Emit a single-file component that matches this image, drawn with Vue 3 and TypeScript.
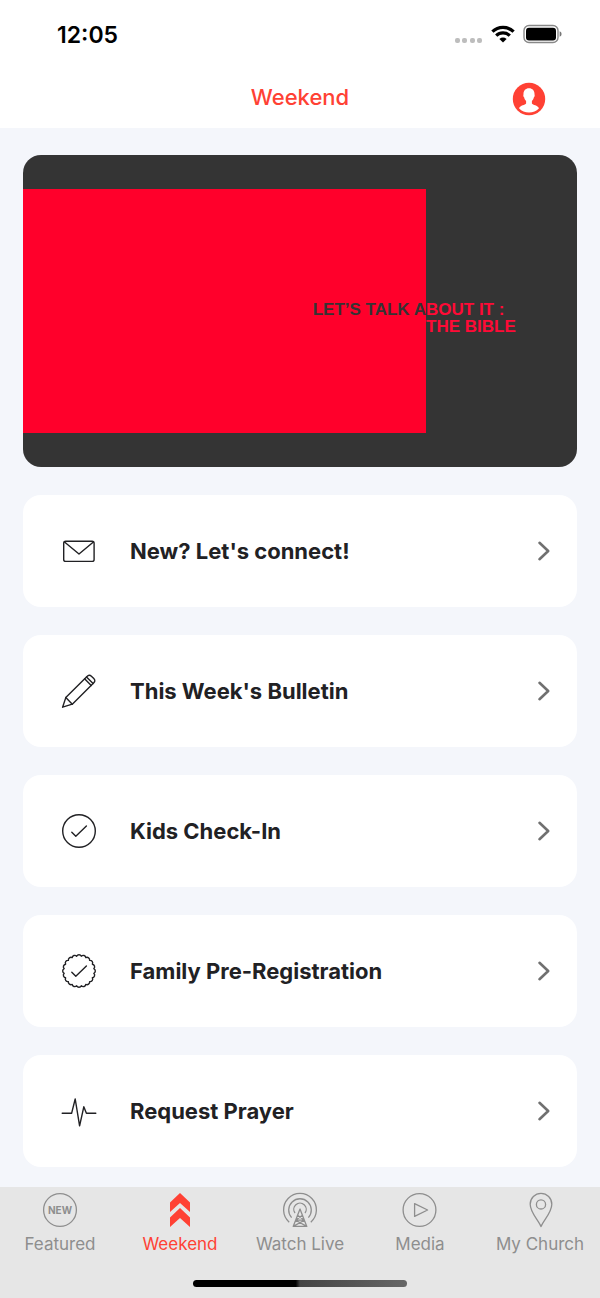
<script setup lang="ts">
type IconName = 'mail' | 'pencil' | 'check' | 'badge' | 'pulse'
type TabName = 'featured' | 'weekend' | 'live' | 'media' | 'church'

interface LinkItem {
  icon: IconName
  label: string
}

interface TabItem {
  icon: TabName
  label: string
}

const links: LinkItem[] = [
  { icon: 'mail', label: 'New? Let\'s connect!' },
  { icon: 'pencil', label: 'This Week\'s Bulletin' },
  { icon: 'check', label: 'Kids Check-In' },
  { icon: 'badge', label: 'Family Pre-Registration' },
  { icon: 'pulse', label: 'Request Prayer' },
]

const tabs: TabItem[] = [
  { icon: 'featured', label: 'Featured' },
  { icon: 'weekend', label: 'Weekend' },
  { icon: 'live', label: 'Watch Live' },
  { icon: 'media', label: 'Media' },
  { icon: 'church', label: 'My Church' },
]

const activeTab: TabName = 'weekend'

// Outline of a round seal whose edge is made of small outward arcs.
function sealPath(center: number, radius: number, lobes: number): string {
  const point = (i: number): string => {
    const angle = ((i + 0.5) / lobes) * Math.PI * 2 - Math.PI / 2
    const x = center + radius * Math.cos(angle)
    const y = center + radius * Math.sin(angle)
    return `${x.toFixed(2)} ${y.toFixed(2)}`
  }
  let d = `M${point(0)}`
  for (let i = 1; i <= lobes; i++) d += `A2.6 2.6 0 0 1 ${point(i)}`
  return `${d}Z`
}

const seal = sealPath(18, 15, 20)
</script>

<template>
  <div class="app">
    <header class="header">
      <div class="status">
        <span class="clock">12:05</span>
        <div class="signals">
          <svg class="dots" width="28" height="20" viewBox="0 0 28 20" aria-hidden="true">
            <rect x="0" y="14" width="5" height="5" rx="2" />
            <rect x="7" y="14" width="5" height="5" rx="2" />
            <rect x="15" y="14" width="5" height="5" rx="2" />
            <rect x="22" y="14" width="5" height="5" rx="2" />
          </svg>
          <svg width="24" height="20" viewBox="0 0 24 20" aria-hidden="true">
            <g fill="none" stroke="#000" stroke-width="3.2">
              <path d="M1.4 7.7A15.2 15.2 0 0 1 22.6 7.7" />
              <path d="M5.2 11.7A9.8 9.8 0 0 1 18.8 11.7" />
            </g>
            <path d="M12 18.6L8.4 14.9Q12 12 15.6 14.9Z" />
          </svg>
          <svg class="battery" width="39" height="20" viewBox="0 0 39 20" aria-hidden="true">
            <rect x="1" y="1.5" width="34" height="17" rx="5" fill="none" stroke="#888" stroke-width="1.4" />
            <rect x="3" y="3.7" width="30" height="12.8" rx="3" />
            <path d="M36.6 7.2Q38.6 8 38.6 10T36.6 12.8Z" fill="#777" />
          </svg>
        </div>
      </div>
      <div class="titlebar">
        <h1 class="title">Weekend</h1>
        <button class="profile" type="button" aria-label="Profile">
          <svg width="34" height="34" viewBox="0 0 34 34" aria-hidden="true">
            <circle cx="17" cy="17" r="16.2" fill="#ff4134" />
            <path
              fill="#fff"
              d="M17 6.2C13.4 6.2 11.3 8.8 11.5 12.4C11.1 12.8 11.3 14.6 12.1 15.2C12.5 17 13.2 18.2 14.1 19V21.6C13.3 23.2 8.2 23.3 7 26.2A13.8 13.8 0 0 0 27 26.2C25.8 23.3 20.7 23.2 19.9 21.6V19C20.8 18.2 21.5 17 21.9 15.2C22.7 14.6 22.9 12.8 22.5 12.4C22.7 8.8 20.6 6.2 17 6.2Z"
            />
          </svg>
        </button>
      </div>
    </header>

    <main class="content">
      <section class="banner" aria-label="Current series">
        <div class="banner-art">
          <p class="art-left">LET’S TALK A</p>
          <p class="art-right">BOUT IT :<br />THE BIBLE</p>
        </div>
      </section>

      <a v-for="link in links" :key="link.icon" class="card" href="#">
        <svg class="card-icon" width="36" height="36" viewBox="0 0 36 36" aria-hidden="true">
          <g v-if="link.icon === 'mail'">
            <rect x="2.7" y="8.2" width="30.4" height="20.2" rx="2" />
            <path d="M3.5 9L18 21L32.4 9" />
          </g>
          <g v-else-if="link.icon === 'pencil'">
            <path d="M1.6 34.2L4.8 24.6L26 3.4C27.4 2 28.8 1.6 30.4 3.2L32.8 5.6C34.4 7.2 34 8.6 32.6 10L11.3 31.2Z" />
            <path d="M4.8 24.6L11.3 31.2M23.6 5.8L30.2 12.4M25.5 3.9L32.1 10.5" />
          </g>
          <g v-else-if="link.icon === 'check'">
            <circle cx="18" cy="18" r="16.3" />
            <path d="M10.8 19.2L14.8 23.2L25.4 13" />
          </g>
          <g v-else-if="link.icon === 'badge'">
            <path :d="seal" />
            <path d="M10.8 19.2L14.8 23.2L25.4 13" />
          </g>
          <g v-else>
            <path d="M1.2 20.3H10.6L14.2 6L18.6 32.8L22.8 13.8L25.4 20.3H34.8" />
          </g>
        </svg>
        <span class="card-label">{{ link.label }}</span>
        <svg class="chevron" width="14" height="22" viewBox="0 0 14 22" aria-hidden="true">
          <path d="M2.5 2.8L11.2 11L2.5 19.2" />
        </svg>
      </a>
    </main>

    <footer class="footer">
      <nav class="tabs" aria-label="Sections">
        <a
          v-for="tab in tabs"
          :key="tab.icon"
          class="tab"
          :class="{ active: tab.icon === activeTab }"
          :aria-current="tab.icon === activeTab ? 'page' : undefined"
          href="#"
        >
          <svg class="tab-icon" width="36" height="36" viewBox="0 0 36 36" aria-hidden="true">
            <g v-if="tab.icon === 'featured'">
              <circle cx="18" cy="18" r="16.4" />
              <text class="new" x="18" y="22" text-anchor="middle">NEW</text>
            </g>
            <g v-else-if="tab.icon === 'weekend'" class="solid">
              <path d="M18 1L28 10.5V20L18 11L8 20V10.5Z" />
              <path d="M18 16L28 25.5V35L18 26L8 35V25.5Z" />
            </g>
            <g v-else-if="tab.icon === 'live'">
              <path d="M7.2 30.2A16.4 16.4 0 1 1 28.8 30.2" />
              <path d="M9.6 25.6A11.3 11.3 0 1 1 26.4 25.6" />
              <path d="M13 21A6.2 6.2 0 1 1 23 21" />
              <path d="M18 17L11.2 34.4H24.8ZM15.6 23.2L22.4 28.2L11.2 34.4M20.4 23.2L13.6 28.2L24.8 34.4M13.6 28.2H22.4" />
            </g>
            <g v-else-if="tab.icon === 'media'">
              <circle cx="17.5" cy="18" r="16.4" />
              <path d="M12.6 11.6V24.4L25.6 18Z" />
            </g>
            <g v-else>
              <path d="M19 34.6C16.8 28.6 8.2 20.6 8.2 12.2A10.8 10.8 0 0 1 29.8 12.2C29.8 20.6 21.2 28.6 19 34.6Z" />
              <circle cx="19" cy="12.4" r="4.6" />
            </g>
          </svg>
          <span class="tab-label">{{ tab.label }}</span>
        </a>
      </nav>
      <div class="home-bar"></div>
    </footer>
  </div>
</template>

<style>
body {
  margin: 0;
  background: #f4f6fb;
}
</style>

<style scoped>
.app {
  display: flex;
  flex-direction: column;
  min-height: 100vh;
  background: #f4f6fb;
  color: #212124;
  font-family: Inter, "Liberation Sans", sans-serif;
}

.header {
  background: #fff;
}

.status {
  display: flex;
  align-items: center;
  justify-content: space-between;
  height: 70px;
  padding: 0 38px 0 57px;
}

.clock {
  color: #000;
  font-size: 23px;
  font-weight: 600;
  line-height: 28px;
}

.signals {
  display: flex;
  align-items: center;
  gap: 8px;
  padding-bottom: 2px;
}

.dots {
  fill: #bdbdbd;
}

.titlebar {
  display: grid;
  grid-template-columns: 1fr auto 1fr;
  align-items: center;
  height: 58px;
  padding: 0 54px;
}

.title {
  grid-column: 2;
  margin: 0;
  padding-bottom: 4px;
  color: #ff4134;
  font-size: 22px;
  font-weight: 500;
  line-height: 28px;
}

.profile {
  justify-self: end;
  display: flex;
  padding: 0;
  border: 0;
  background: none;
  cursor: pointer;
}

.content {
  display: flex;
  flex: 1;
  flex-direction: column;
  gap: 28px;
  padding: 27px 23px 20px;
}

.banner {
  display: flex;
  flex-direction: column;
  justify-content: center;
  height: 312px;
  border-radius: 18px;
  background: #343434;
  overflow: hidden;
}

.banner-art {
  display: grid;
  grid-template-columns: 403fr 151fr;
  align-content: center;
  height: 244px;
  padding-top: 14px;
  box-sizing: border-box;
  background: linear-gradient(#ff002b, #ff002b) left / 72.75% 100% no-repeat;
  font-family: "Liberation Sans", Arial, sans-serif;
  font-size: 17px;
  font-weight: 700;
  line-height: 17px;
}

.banner-art p {
  margin: 0;
  white-space: nowrap;
}

.art-left {
  color: #343434;
  text-align: right;
}

.art-right {
  color: #ff0a36;
}

.card {
  display: flex;
  align-items: center;
  height: 112px;
  padding: 0 26px 0 38px;
  box-sizing: border-box;
  border-radius: 18px;
  background: #fff;
  color: inherit;
  text-decoration: none;
}

.card-icon {
  fill: none;
  stroke: #212124;
  stroke-width: 1.4;
  stroke-linejoin: round;
  stroke-linecap: round;
}

.card-label {
  flex: 1;
  margin-left: 33px;
  font-size: 22px;
  font-weight: 700;
  line-height: 28px;
}

.chevron {
  fill: none;
  stroke: #707070;
  stroke-width: 2.6;
  stroke-linecap: round;
  stroke-linejoin: round;
}

.footer {
  display: flex;
  flex-direction: column;
  align-items: center;
  padding: 5px 0 11px;
  background: #e6e6e6;
}

.tabs {
  display: grid;
  grid-template-columns: repeat(5, 1fr);
  width: 100%;
}

.tab {
  display: flex;
  flex-direction: column;
  align-items: center;
  gap: 4px;
  color: #8e8e8e;
  text-decoration: none;
}

.tab-icon {
  fill: none;
  stroke: currentColor;
  stroke-width: 1.3;
  stroke-linejoin: round;
}

.solid {
  fill: currentColor;
  stroke: none;
}

.new {
  fill: currentColor;
  stroke: none;
  font-size: 10px;
  font-weight: 700;
}

.tab-label {
  font-size: 17px;
  line-height: 24px;
  white-space: nowrap;
}

.active {
  color: #ff4134;
}

.home-bar {
  width: 214px;
  height: 7px;
  margin-top: 24px;
  border-radius: 4px;
  background: linear-gradient(90deg, #000 48%, #444 50%, #666);
}
</style>
